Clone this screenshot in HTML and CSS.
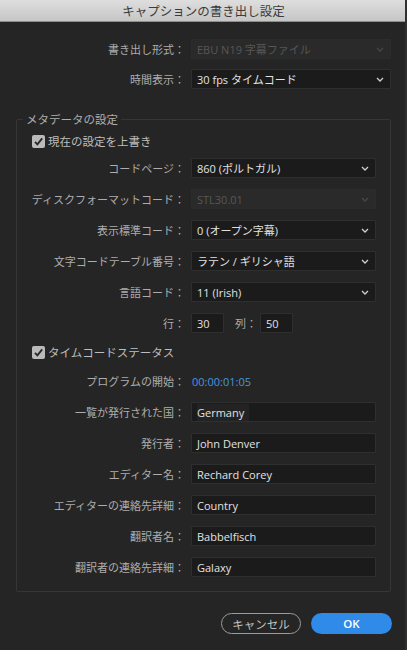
FILE: index.html
```html
<!DOCTYPE html>
<html lang="ja">
<head>
<meta charset="utf-8">
<title>キャプションの書き出し設定</title>
<link rel="stylesheet" href="styles.css">
</head>
<body>
<div class="window">
  <div class="titlebar">キャプションの書き出し設定</div>
  <div class="top">
    <div class="row">
      <div class="label wide">書き出し形式：</div>
      <div class="select big disabled"><span>EBU N19 字幕ファイル</span><svg class="chev" width="8" height="5" viewBox="0 0 8 5"><path d="M1 1 L4 4 L7 1"/></svg></div>
    </div>
    <div class="row">
      <div class="label wide">時間表示：</div>
      <div class="select big"><span>30 fps タイムコード</span><svg class="chev" width="8" height="5" viewBox="0 0 8 5"><path d="M1 1 L4 4 L7 1"/></svg></div>
    </div>
  </div>
  <fieldset class="meta">
    <legend>メタデータの設定</legend>
    <div class="check first"><span class="box"><svg width="13" height="13" viewBox="0 0 13 13"><path d="M3 6.8 L5.4 9.3 L10.2 3.4"/></svg></span><span>現在の設定を上書き</span></div>
    <div class="row">
      <div class="label">コードページ：</div>
      <div class="select"><span>860 (ポルトガル)</span><svg class="chev" width="8" height="5" viewBox="0 0 8 5"><path d="M1 1 L4 4 L7 1"/></svg></div>
    </div>
    <div class="row">
      <div class="label">ディスクフォーマットコード：</div>
      <div class="select disabled"><span>STL30.01</span><svg class="chev" width="8" height="5" viewBox="0 0 8 5"><path d="M1 1 L4 4 L7 1"/></svg></div>
    </div>
    <div class="row">
      <div class="label">表示標準コード：</div>
      <div class="select"><span>0 (オープン字幕)</span><svg class="chev" width="8" height="5" viewBox="0 0 8 5"><path d="M1 1 L4 4 L7 1"/></svg></div>
    </div>
    <div class="row">
      <div class="label">文字コードテーブル番号：</div>
      <div class="select"><span>ラテン / ギリシャ語</span><svg class="chev" width="8" height="5" viewBox="0 0 8 5"><path d="M1 1 L4 4 L7 1"/></svg></div>
    </div>
    <div class="row">
      <div class="label">言語コード：</div>
      <div class="select"><span>11 (Irish)</span><svg class="chev" width="8" height="5" viewBox="0 0 8 5"><path d="M1 1 L4 4 L7 1"/></svg></div>
    </div>
    <div class="row">
      <div class="label">行：</div>
      <div class="field small">30</div>
      <div class="sublabel">列：</div>
      <div class="field small">50</div>
    </div>
    <div class="check"><span class="box"><svg width="13" height="13" viewBox="0 0 13 13"><path d="M3 6.8 L5.4 9.3 L10.2 3.4"/></svg></span><span>タイムコードステータス</span></div>
    <div class="row">
      <div class="label">プログラムの開始：</div>
      <div class="timecode">00:00:01:05</div>
    </div>
    <div class="row">
      <div class="label">一覧が発行された国：</div>
      <div class="field"><span class="hl">Germany</span></div>
    </div>
    <div class="row">
      <div class="label">発行者：</div>
      <div class="field">John Denver</div>
    </div>
    <div class="row">
      <div class="label">エディター名：</div>
      <div class="field">Rechard Corey</div>
    </div>
    <div class="row">
      <div class="label">エディターの連絡先詳細：</div>
      <div class="field">Country</div>
    </div>
    <div class="row">
      <div class="label">翻訳者名：</div>
      <div class="field">Babbelfisch</div>
    </div>
    <div class="row">
      <div class="label">翻訳者の連絡先詳細：</div>
      <div class="field">Galaxy</div>
    </div>
  </fieldset>
  <div class="buttons">
    <button class="btn cancel">キャンセル</button>
    <button class="btn ok">OK</button>
  </div>
</div>
</body>
</html>
```

FILE: styles.css
```css
html, body {
  margin: 0;
  padding: 0;
  background: #252525;
}
body {
  font-family: "Open Sans", "Noto Sans CJK JP", sans-serif;
  font-size: 11px;
  color: #adadad;
}
.window {
  width: 405px;
  height: 650px;
  background: #252525;
  border-right: 2px solid #303030;
  box-sizing: content-box;
}
.titlebar {
  height: 22px;
  box-sizing: border-box;
  background: linear-gradient(#dedede, #c6c6c6);
  border-bottom: 1px solid #8e8e8e;
  color: #3b3b3b;
  font-family: "Noto Sans CJK JP", sans-serif;
  font-size: 12.5px;
  line-height: 21px;
  text-align: center;
  padding-left: 2px;
}
.top {
  display: flex;
  flex-direction: column;
  gap: 10px;
  padding-top: 17px;
  padding-right: 14px;
}
.row {
  display: flex;
  align-items: center;
  height: 20px;
  gap: 6px;
}
.label {
  width: 168px;
  flex: none;
  text-align: right;
  font-family: "Noto Sans CJK JP", sans-serif;
  font-size: 11px;
  color: #adadad;
  white-space: nowrap;
  line-height: 20px;
}
.label.wide {
  width: 185px;
}
.select, .field {
  box-sizing: border-box;
  height: 20px;
  width: 185px;
  background: #1b1b1b;
  border: 1px solid #2f2f2f;
  border-radius: 1px;
  display: flex;
  align-items: center;
  padding: 0 5px;
  color: #e2e2e2;
  font-size: 11px;
  white-space: nowrap;
}
.select span {
  flex: 1;
}
.select.big {
  width: 200px;
}
.select.disabled {
  background: #2a2a2a;
  border-color: #2c2c2c;
  color: #575757;
}
.chev {
  flex: none;
  margin-right: 1px;
}
.chev path {
  fill: none;
  stroke: #cfcfcf;
  stroke-width: 1.3;
}
.select.disabled .chev path {
  stroke: #474747;
}
.field.small {
  width: 33px;
}
.sublabel {
  margin-left: 5px;
  margin-right: -3px;
  font-family: "Noto Sans CJK JP", sans-serif;
  color: #adadad;
}
.hl {
  background: #232323;
  padding: 1px 5px 1px 0;
}
.timecode {
  color: #4597dd;
  font-size: 11px;
  margin-left: 1px;
}
.meta {
  margin: 22px 14px 0 16px;
  padding: 0 14px 14px 0;
  border: 1px solid #363636;
  border-radius: 2px;
  display: flex;
  flex-direction: column;
  gap: 11px;
  min-width: 0;
}
.meta legend {
  margin-left: 6px;
  padding: 0 3px;
  font-family: "Noto Sans CJK JP", sans-serif;
  font-size: 11.5px;
  line-height: 16px;
  color: #adadad;
}
.check {
  display: flex;
  align-items: center;
  height: 16px;
  padding-left: 15px;
  gap: 3px;
  font-family: "Noto Sans CJK JP", sans-serif;
  font-size: 11.5px;
  color: #bdbdbd;
}
.check.first {
  margin-top: 6px;
  margin-bottom: -2px;
}
.box {
  width: 13px;
  height: 13px;
  background: #bababa;
  border-radius: 2px;
  display: flex;
}
.box path {
  fill: none;
  stroke: #262626;
  stroke-width: 1.8;
}
.buttons {
  display: flex;
  justify-content: flex-end;
  gap: 10px;
  margin-top: 21px;
  padding-right: 13px;
}
.btn {
  height: 21px;
  border-radius: 11px;
  font-family: "Noto Sans CJK JP", sans-serif;
  font-size: 11.5px;
  padding: 0;
  line-height: 18px;
  cursor: default;
}
.cancel {
  width: 80px;
  background: transparent;
  border: 1.5px solid #9b9b9b;
  color: #c2c2c2;
}
.ok {
  width: 81px;
  background: #2f8ae8;
  border: none;
  color: #ffffff;
  font-family: "Open Sans", sans-serif;
  font-weight: 600;
}
```
